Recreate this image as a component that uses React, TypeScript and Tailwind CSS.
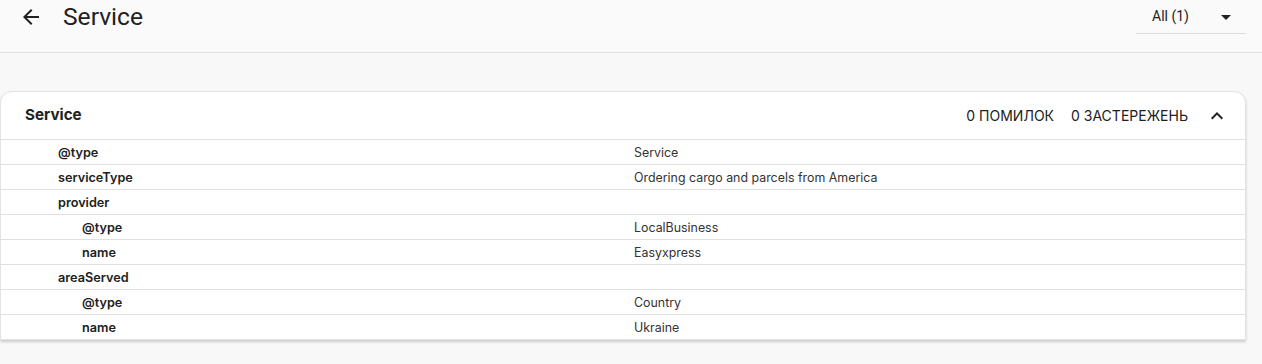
const rows = [
  { key: "@type", value: "Service", depth: 0 },
  { key: "serviceType", value: "Ordering cargo and parcels from America", depth: 0 },
  { key: "provider", value: "", depth: 0 },
  { key: "@type", value: "LocalBusiness", depth: 1 },
  { key: "name", value: "Easyxpress", depth: 1 },
  { key: "areaServed", value: "", depth: 0 },
  { key: "@type", value: "Country", depth: 1 },
  { key: "name", value: "Ukraine", depth: 1 },
];

export default function App() {
  return (
    <div className="min-h-[364px] bg-[#f8f8f8] font-['Inter',sans-serif] text-[#212121]">
      {/* верхняя панель */}
      <div className="h-[53px] border-b border-[#e0e0e0] bg-[#fafafa] flex items-start justify-between pr-4 font-['Roboto',sans-serif]">
        <div className="flex items-center h-[34px]">
          <button className="ml-[19px] w-6 h-6 flex items-center justify-center text-[#212121]">
            <svg width="24" height="24" viewBox="0 0 24 24" fill="currentColor">
              <path d="M20 11H7.83l5.59-5.59L12 4l-8 8 8 8 1.41-1.41L7.83 13H20v-2z" />
            </svg>
          </button>
          <h1 className="ml-[20px] text-[24.6px] leading-none text-[#212121]">Service</h1>
        </div>
        <div className="w-[110px] h-[34px] border-b border-[#dcdcdc] flex items-center justify-between pl-4 pr-[15px]">
          <span className="text-[14px] text-[#212121]">All (1)</span>
          <svg width="24" height="24" viewBox="0 0 24 24" fill="currentColor" className="text-[#212121] -mr-[7px]">
            <path d="M7 10l5 5 5-5z" />
          </svg>
        </div>
      </div>

      {/* карточка */}
      <div className="mt-[38px] w-[1246px] bg-white rounded-t-xl border border-[#e3e3e3] shadow-[0_2px_3px_rgba(0,0,0,0.18)]">
        <div className="h-[47px] flex items-center justify-between pl-6 pr-4">
          <h2 className="text-[15.2px] font-bold">Service</h2>
          <div className="flex items-center text-[14px] text-[#212121]">
            <span>0 ПОМИЛОК</span>
            <span className="ml-[17px]">0 ЗАСТЕРЕЖЕНЬ</span>
            <svg width="24" height="24" viewBox="0 0 24 24" fill="currentColor" className="ml-[17px]">
              <path d="M12 8l-6 6 1.41 1.41L12 10.83l4.59 4.58L18 14z" />
            </svg>
          </div>
        </div>
        {rows.map((r, i) => (
          <div key={i} className="h-[25px] pt-px border-t border-[#e0e0e0] grid grid-cols-[633px_1fr] items-center">
            <span className={`text-[12.7px] font-semibold ${r.depth ? "pl-[81px]" : "pl-[57px]"}`}>{r.key}</span>
            <span className="text-[12.4px] pt-px text-[#333]">{r.value}</span>
          </div>
        ))}
      </div>
    </div>
  );
}
